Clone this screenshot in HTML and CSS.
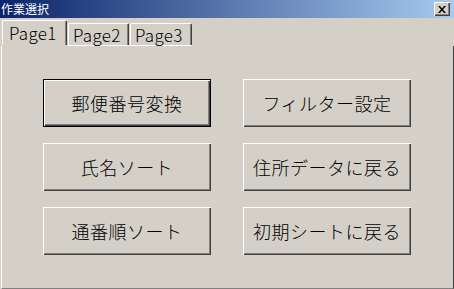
FILE: index.html
```html
<!DOCTYPE html>
<html lang="ja">
<head>
  <meta charset="UTF-8" />
  <meta name="viewport" content="width=device-width, initial-scale=1.0"/>
  <title>作業選択</title>
  <link rel="stylesheet" href="styles.css">
</head>
<body>
  <div class="window">
    <div class="titlebar">
      <span class="title">作業選択</span>
      <span class="close">
        <svg width="8" height="7" viewBox="0 0 8 7">
          <path d="M0 0h2l2 2.5 2-2.5h2l-3 3.5 3 3.5h-2l-2-2.5-2 2.5h-2l3-3.5z" fill="#000"/>
        </svg>
      </span>
    </div>

    <div class="form">
      <!-- タブ -->
      <div class="tabs">
        <div class="tab active">Page1</div>
        <div class="tab">Page2</div>
        <div class="tab">Page3</div>
        <div class="tab-rest"></div>
      </div>

      <!-- ページ本体 -->
      <div class="page">
        <div class="buttons">
          <button class="btn default">郵便番号変換</button>
          <button class="btn">フィルター設定</button>
          <button class="btn">氏名ソート</button>
          <button class="btn">住所データに戻る</button>
          <button class="btn">通番順ソート</button>
          <button class="btn">初期シートに戻る</button>
        </div>
      </div>
    </div>
  </div>
</body>
</html>
```

FILE: styles.css
```css
body {
  margin: 0;
  background-color: #d4d0c8;
  font-family: 'Noto Sans CJK JP', sans-serif;
}

.window {
  width: 454px;
  height: 289px;
  display: flex;
  flex-direction: column;
  background-color: #d4d0c8;
  overflow: hidden;
}

.titlebar {
  height: 18px;
  display: flex;
  align-items: center;
  justify-content: space-between;
  padding: 0 4px 0 1px;
  background: linear-gradient(to right, #0a246a, #a6caf0);
  color: #fff;
  box-sizing: border-box;
}

.title {
  font-size: 12px;
  line-height: 14px;
}

.close {
  width: 16px;
  height: 14px;
  display: flex;
  align-items: center;
  justify-content: center;
  background-color: #d4d0c8;
  box-shadow: inset 1px 1px #fff, inset -1px -1px #404040, inset -2px -2px #808080;
}

.form {
  flex: 1;
  display: flex;
  flex-direction: column;
}

.tabs {
  height: 27px;
  display: flex;
  align-items: flex-end;
  padding-left: 2px;
}

.tab {
  box-sizing: border-box;
  width: 61px;
  height: 22px;
  padding-left: 4px;
  margin-right: 1px;
  font-family: 'Noto Sans CJK JP', sans-serif;
  font-size: 17px;
  font-weight: 300;
  letter-spacing: 0.3px;
  line-height: 22px;
  color: #000;
  border-top: 1px solid #fff;
  border-left: 1px solid #fff;
  border-right: 1px solid #404040;
  box-shadow: inset -1px 0 #808080, 0 1px #fff;
  border-radius: 2px 2px 0 0;
}

.tab:nth-child(3) {
  width: 62px;
}

.tab.active {
  width: 65px;
  height: 25px;
  line-height: 24px;
  padding-left: 6px;
  box-shadow: inset -1px 0 #808080;
  position: relative;
  z-index: 1;
}

.tab-rest {
  flex: 1;
  box-shadow: 0 1px #fff;
}

.page {
  flex: 1;
  border-left: 1px solid #fff;
  border-right: 1px solid #404040;
  border-bottom: 1px solid #808080;
  margin-left: 1px;
  margin-top: 1px;
  padding: 33px 0 0 41px;
}

.buttons {
  display: grid;
  grid-template-columns: 168px 168px;
  grid-auto-rows: 48px;
  column-gap: 32px;
  row-gap: 16px;
}

.btn {
  margin: 0;
  padding: 0;
  border: none;
  background-color: #d4d0c8;
  font-family: 'Noto Sans CJK JP', sans-serif;
  font-size: 18px;
  font-weight: 300;
  letter-spacing: 0.5px;
  color: #000;
  box-shadow: inset 1px 1px #fff, inset -1px -1px #404040, inset -2px -2px #808080;
}

.btn.default {
  border: 1px solid #000;
}
```
